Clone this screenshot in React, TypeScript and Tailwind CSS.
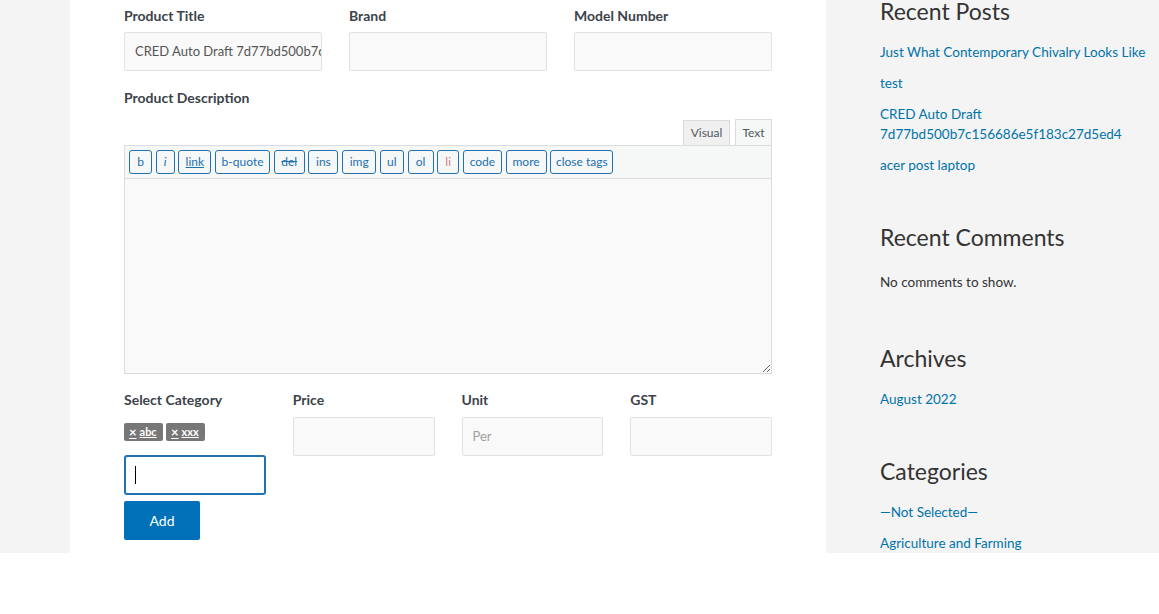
import React from 'react';

const FONT = { fontFamily: 'Lato, "Open Sans", sans-serif' };

const QUICKTAGS: { label: string; cls?: string; w: string }[] = [
  { label: 'b', w: 'w-[23px]' },
  { label: 'i', cls: 'italic', w: 'w-[19px]' },
  { label: 'link', cls: 'underline', w: 'w-[33px]' },
  { label: 'b-quote', w: 'w-[55px]' },
  { label: 'del', cls: 'line-through', w: 'w-[31px]' },
  { label: 'ins', w: 'w-[30px]' },
  { label: 'img', w: 'w-[34px]' },
  { label: 'ul', w: 'w-[24px]' },
  { label: 'ol', w: 'w-[26px]' },
  { label: 'li', cls: 'text-[#d97c86]', w: 'w-[22px]' },
  { label: 'code', w: 'w-[39px]' },
  { label: 'more', w: 'w-[41px]' },
  { label: 'close tags', w: 'w-[63px]' },
];

function Label({ children }: { children: React.ReactNode }) {
  return <div className="h-5 text-[14px] leading-5 font-bold text-[#3c434a]">{children}</div>;
}

function TextField({ value, placeholder }: { value?: string; placeholder?: string }) {
  return (
    <div className="h-[39px] w-full border border-[#e2e2e2] rounded-[2px] bg-[#f9f9f9] px-[10px] flex items-center overflow-hidden whitespace-nowrap text-[13px]">
      {value && <span className="text-[#555]">{value}</span>}
      {placeholder && <span className="text-[#a0a0a0]">{placeholder}</span>}
    </div>
  );
}

function Field({
  label,
  value,
  placeholder,
  gap = 'gap-[6px]',
}: {
  label: string;
  value?: string;
  placeholder?: string;
  gap?: string;
}) {
  return (
    <div className={`flex flex-col ${gap}`}>
      <Label>{label}</Label>
      <TextField value={value} placeholder={placeholder} />
    </div>
  );
}

function Editor() {
  return (
    <div className="flex flex-col">
      {/* Visual / Text switch */}
      <div className="flex justify-end items-end gap-[5px] h-[25px]">
        <div className="h-[25px] w-[47px] border border-[#dcdcde] border-b-0 bg-[#f0f0f1] text-[12px] text-[#50575e] flex items-center justify-center">
          Visual
        </div>
        <div className="h-[26px] w-[37px] border border-[#dcdcde] border-b-0 bg-[#f6f7f7] text-[12px] text-[#50575e] flex items-center justify-center">
          Text
        </div>
      </div>
      <div className="h-[34px] border border-[#dcdcde] bg-[#f6f7f7] flex items-center gap-[3.7px] px-[4px]">
        {QUICKTAGS.map((t) => (
          <button
            key={t.label}
            type="button"
            className={`${t.w} h-[24px] shrink-0 border border-[#2271b1] rounded-[3px] bg-[#f6f7f7] text-[12px] text-[#2271b1] flex items-center justify-center ${t.cls ?? ''}`}
          >
            {t.label}
          </button>
        ))}
      </div>
      <textarea
        className="h-[195px] w-full border border-t-0 border-[#dcdcde] bg-[#f9f9f9] outline-none block"
        style={{ resize: 'vertical' }}
      />
    </div>
  );
}

function CategoryTag({ name }: { name: string }) {
  return (
    <span className="h-[18px] w-[39px] px-[5px] rounded-[2px] bg-[#777] text-white text-[11px] font-bold flex items-center gap-[3px]">
      <span className="underline text-[13px] leading-none">×</span>
      <span className="underline">{name}</span>
    </span>
  );
}

function WidgetTitle({ children, className }: { children: React.ReactNode; className?: string }) {
  return <h2 className={`text-[23px] leading-[28px] text-[#333] font-normal ${className ?? ''}`}>{children}</h2>;
}

function SideLink({ children }: { children: React.ReactNode }) {
  return <a className="text-[13.5px] leading-[20px] text-[#0073aa] py-[5.5px] block">{children}</a>;
}

export default function App() {
  return (
    <div style={FONT} className="flex h-[553px] w-full overflow-hidden">
      <div className="w-[70px] shrink-0 bg-[#f4f4f4]" />

      <main className="w-[756px] shrink-0 bg-white px-[54px] pt-[6px]">
        <div className="grid grid-cols-3 gap-x-[27px]">
          <Field label="Product Title" value="CRED Auto Draft 7d77bd500b7c156686e5f183c27d5ed4" />
          <Field label="Brand" />
          <Field label="Model Number" />
        </div>

        <div className="mt-[17px]">
          <Label>Product Description</Label>
        </div>
        <div className="mt-[12px]">
          <Editor />
        </div>

        <div className="mt-[16px] grid grid-cols-4 gap-x-[27px]">
          <div className="flex flex-col">
            <Label>Select Category</Label>
            <div className="mt-[13px] flex gap-[3px]">
              <CategoryTag name="abc" />
              <CategoryTag name="xxx" />
            </div>
            <div className="mt-[15px] mx-px h-[38px] border border-[#2271b1] shadow-[0_0_0_1px_#2271b1] rounded-[2px] bg-white flex items-center px-[9px]">
              <span className="w-px h-[18px] bg-black" />
            </div>
            <button
              type="button"
              className="mt-[7px] h-[39px] w-[76px] rounded-[2px] bg-[#0071b9] text-white text-[14px]"
            >
              Add
            </button>
          </div>
          <Field label="Price" gap="gap-[7px]" />
          <Field label="Unit" placeholder="Per" gap="gap-[7px]" />
          <Field label="GST" gap="gap-[7px]" />
        </div>
      </main>

      <aside className="flex-1 bg-[#f4f4f4] pl-[54px] whitespace-nowrap">
        <WidgetTitle className="-mt-[3px]">Recent Posts</WidgetTitle>
        <div className="mt-[11px] flex flex-col">
          <SideLink>Just What Contemporary Chivalry Looks Like</SideLink>
          <SideLink>test</SideLink>
          <SideLink>
            CRED Auto Draft
            <br />
            7d77bd500b7c156686e5f183c27d5ed4
          </SideLink>
          <SideLink>acer post laptop</SideLink>
        </div>

        <WidgetTitle className="mt-[43px]">Recent Comments</WidgetTitle>
        <p className="mt-[15px] text-[13.5px] leading-[20px] text-[#333] py-[5.5px]">No comments to show.</p>

        <WidgetTitle className="mt-[47px]">Archives</WidgetTitle>
        <div className="mt-[11px]">
          <SideLink>August 2022</SideLink>
        </div>

        <WidgetTitle className="mt-[43px]">Categories</WidgetTitle>
        <div className="mt-[11px] flex flex-col">
          <SideLink>—Not Selected—</SideLink>
          <SideLink>Agriculture and Farming</SideLink>
        </div>
      </aside>
    </div>
  );
}
